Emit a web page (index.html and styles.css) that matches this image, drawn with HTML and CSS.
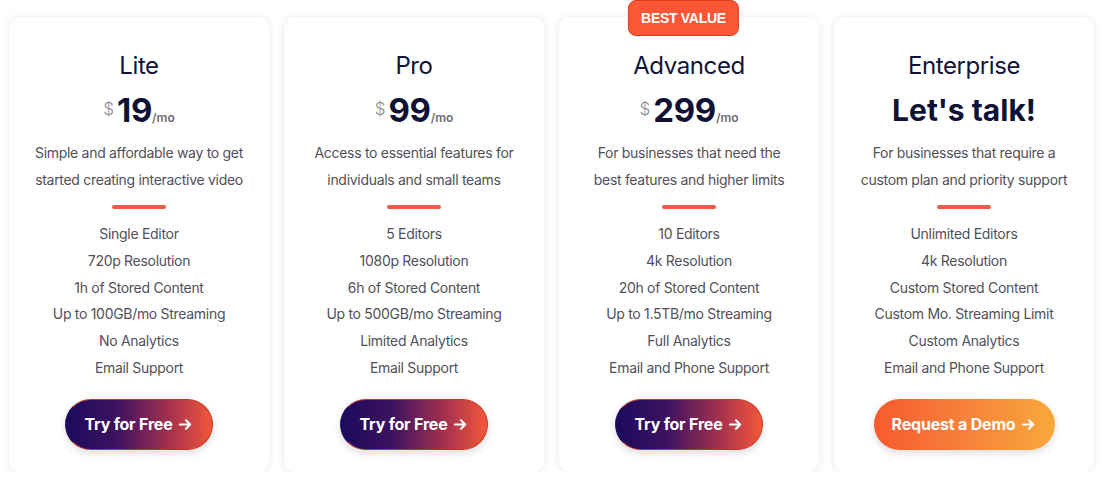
FILE: index.html
```html
<!DOCTYPE html>
<html lang="en">
<head>
<meta charset="utf-8">
<title>Pricing</title>
<link rel="stylesheet" href="styles.css">
</head>
<body>
<main class="plans">
  <section class="card">
    <h2 class="title">Lite</h2>
    <div class="price"><span class="cur">$</span><span class="amt">19</span><span class="per">/mo</span></div>
    <p class="desc">Simple and affordable way to get<br>started creating interactive video</p>
    <div class="divider"></div>
    <ul class="features">
      <li>Single Editor</li>
      <li>720p Resolution</li>
      <li>1h of Stored Content</li>
      <li>Up to 100GB/mo Streaming</li>
      <li>No Analytics</li>
      <li>Email Support</li>
    </ul>
    <a class="btn btn-try" href="#">Try for Free <svg class="arrow" viewBox="0 0 16 16" width="15" height="15"><path d="M2 8h11M8.5 3.5L13 8l-4.5 4.5" fill="none" stroke="#fff" stroke-width="2.2" stroke-linecap="round" stroke-linejoin="round"/></svg></a>
  </section>
  <section class="card">
    <h2 class="title">Pro</h2>
    <div class="price"><span class="cur">$</span><span class="amt">99</span><span class="per">/mo</span></div>
    <p class="desc">Access to essential features for<br>individuals and small teams</p>
    <div class="divider"></div>
    <ul class="features">
      <li>5 Editors</li>
      <li>1080p Resolution</li>
      <li>6h of Stored Content</li>
      <li>Up to 500GB/mo Streaming</li>
      <li>Limited Analytics</li>
      <li>Email Support</li>
    </ul>
    <a class="btn btn-try" href="#">Try for Free <svg class="arrow" viewBox="0 0 16 16" width="15" height="15"><path d="M2 8h11M8.5 3.5L13 8l-4.5 4.5" fill="none" stroke="#fff" stroke-width="2.2" stroke-linecap="round" stroke-linejoin="round"/></svg></a>
  </section>
  <section class="card">
    <div class="badge">BEST VALUE</div>
    <h2 class="title">Advanced</h2>
    <div class="price"><span class="cur">$</span><span class="amt">299</span><span class="per">/mo</span></div>
    <p class="desc">For businesses that need the<br>best features and higher limits</p>
    <div class="divider"></div>
    <ul class="features">
      <li>10 Editors</li>
      <li>4k Resolution</li>
      <li>20h of Stored Content</li>
      <li>Up to 1.5TB/mo Streaming</li>
      <li>Full Analytics</li>
      <li>Email and Phone Support</li>
    </ul>
    <a class="btn btn-try" href="#">Try for Free <svg class="arrow" viewBox="0 0 16 16" width="15" height="15"><path d="M2 8h11M8.5 3.5L13 8l-4.5 4.5" fill="none" stroke="#fff" stroke-width="2.2" stroke-linecap="round" stroke-linejoin="round"/></svg></a>
  </section>
  <section class="card">
    <h2 class="title">Enterprise</h2>
    <div class="price"><span class="talk">Let's talk!</span></div>
    <p class="desc">For businesses that require a<br>custom plan and priority support</p>
    <div class="divider"></div>
    <ul class="features">
      <li>Unlimited Editors</li>
      <li>4k Resolution</li>
      <li>Custom Stored Content</li>
      <li>Custom Mo. Streaming Limit</li>
      <li>Custom Analytics</li>
      <li>Email and Phone Support</li>
    </ul>
    <a class="btn btn-demo" href="#">Request a Demo <svg class="arrow" viewBox="0 0 16 16" width="15" height="15"><path d="M2 8h11M8.5 3.5L13 8l-4.5 4.5" fill="none" stroke="#fff" stroke-width="2.2" stroke-linecap="round" stroke-linejoin="round"/></svg></a>
  </section>
</main>
</body>
</html>
```
FILE: styles.css
```css
* { box-sizing: border-box; }
html, body { margin: 0; padding: 0; background: #fff; }
body { font-family: Inter, "Noto Sans", sans-serif; color: #4f4f58; }

.plans {
  display: flex;
  gap: 15px;
  padding: 17px 9px 0;
}

.card {
  position: relative;
  width: 260px;
  height: 455px;
  background: #fff;
  border-radius: 12px;
  box-shadow: 0 0 10px rgba(0, 0, 0, 0.09);
  display: flex;
  flex-direction: column;
  align-items: center;
  padding: 33px 10px 0;
  text-align: center;
}

.badge {
  position: absolute;
  top: -17px;
  left: 50%;
  transform: translateX(-55%);
  width: 111px;
  height: 36px;
  background: #fb5737;
  border: 1px solid #d8401f;
  border-radius: 8px;
  color: #fff;
  font-family: "Liberation Sans", Arial, sans-serif;
  font-weight: 700;
  font-size: 14px;
  letter-spacing: -0.3px;
  display: flex;
  align-items: center;
  justify-content: center;
  padding-bottom: 1px;
}

.title {
  margin: 0;
  font-size: 24px;
  line-height: 32px;
  font-weight: 400;
  letter-spacing: -0.4px;
  color: #111338;
}

.price {
  margin-top: 6px;
  height: 44px;
  display: flex;
  align-items: baseline;
  justify-content: center;
  color: #0f1235;
}
.cur {
  font-size: 17px;
  font-weight: 300;
  color: #8a8a93;
  align-self: flex-start;
  margin-top: 11px;
  margin-right: 3px;
}
.amt {
  font-size: 33px;
  font-weight: 700;
  line-height: 44px;
  letter-spacing: -0.3px;
}
.per {
  font-size: 12px;
  font-weight: 600;
  color: #6b6b74;
  margin-left: 0;
}
.talk {
  font-size: 30px;
  font-weight: 700;
  line-height: 44px;
  color: #0f1235;
}

.desc {
  margin: 7px 0 0;
  font-size: 14px;
  line-height: 27px;
  letter-spacing: -0.3px;
  color: #50505a;
}

.divider {
  margin-top: 12px;
  width: 54px;
  height: 4px;
  border-radius: 2px;
  background: #ee5b42;
}

.features {
  list-style: none;
  margin: 12px 0 0;
  padding: 0;
  font-size: 14px;
  line-height: 26.8px;
  letter-spacing: -0.3px;
  color: #50505a;
}

.btn {
  margin-top: 17px;
  height: 51px;
  border-radius: 26px;
  display: inline-flex;
  align-items: center;
  justify-content: center;
  gap: 6px;
  color: #fff;
  text-decoration: none;
  font-size: 16px;
  font-weight: 700;
  letter-spacing: -0.2px;
  box-shadow: 0 3px 8px rgba(0, 0, 0, 0.14);
}
.btn-try {
  width: 148px;
  background: linear-gradient(90deg, #1c0a5c 0%, #3d1260 35%, #a2304e 70%, #f4573a 100%);
  border: 1px solid #c2361f;
  border-left-color: #1c0a5c;
}
.btn-demo {
  width: 181px;
  background: linear-gradient(90deg, #f75a2e 0%, #f7813a 50%, #f8a83c 100%);
}
.arrow { display: block; }
```
